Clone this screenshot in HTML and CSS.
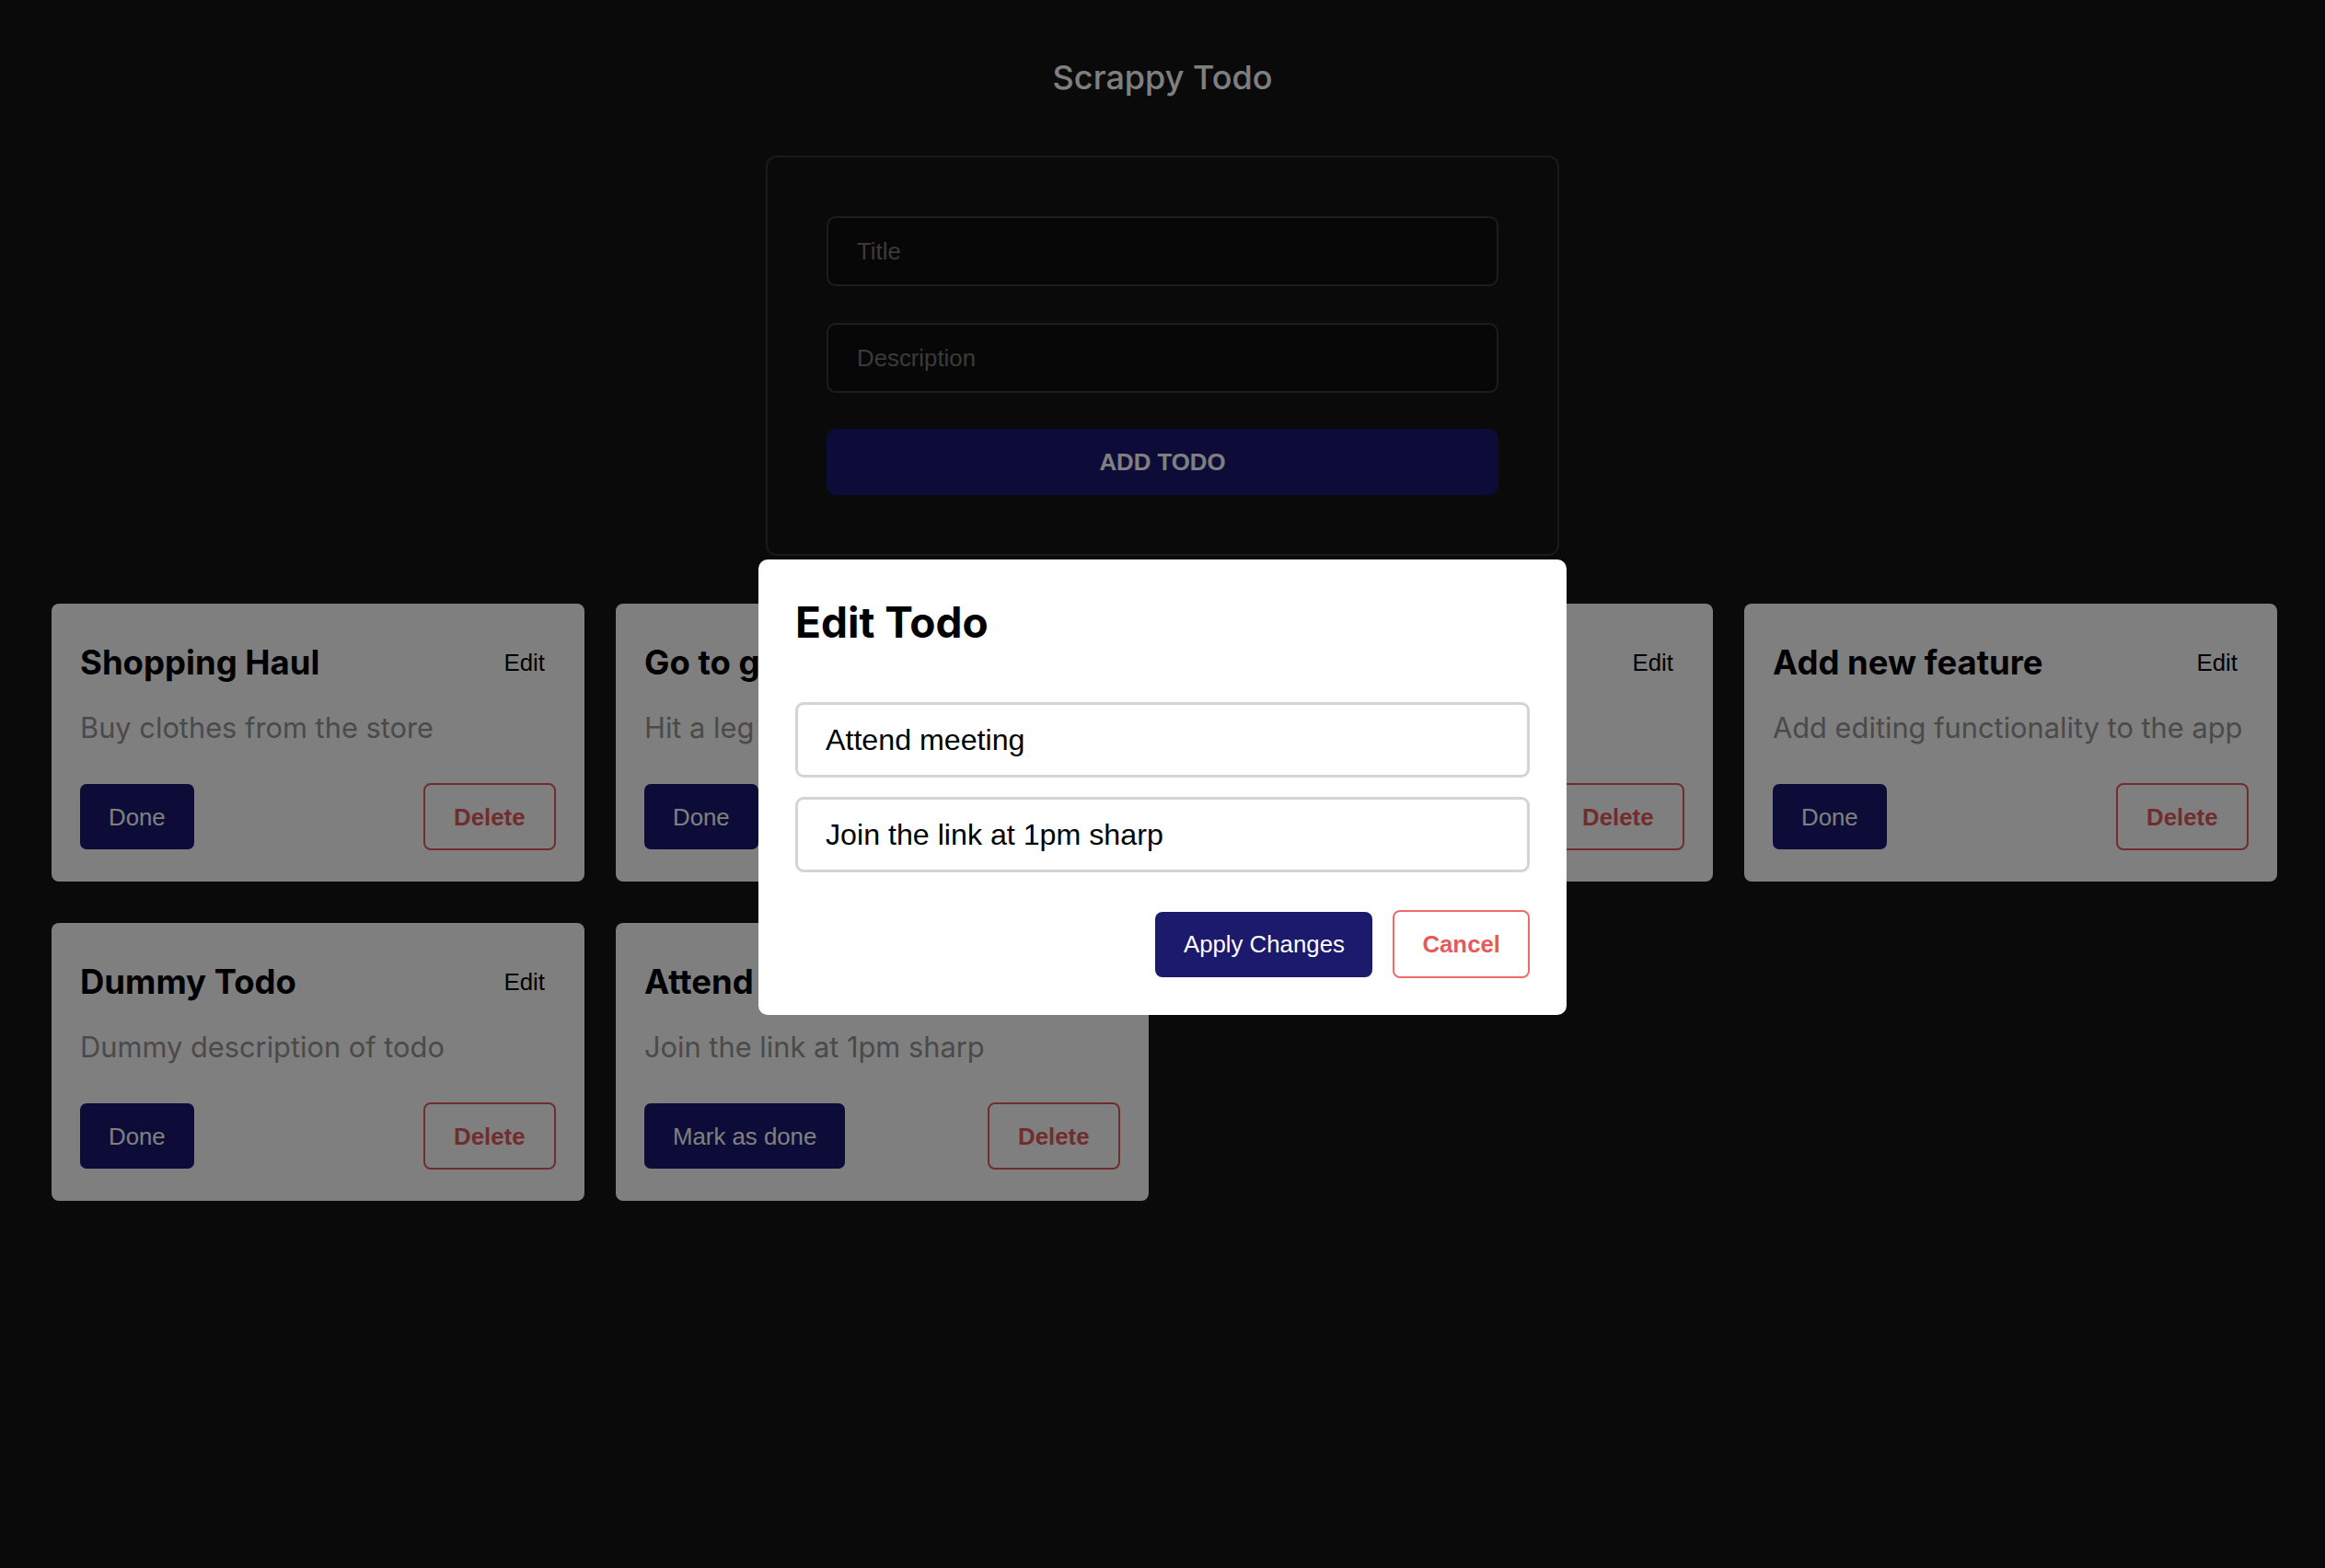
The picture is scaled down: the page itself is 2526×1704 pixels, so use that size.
FILE: index.html
```html
<!DOCTYPE html>
<html lang="en">
<head>
    <meta charset="UTF-8">
    <meta name="viewport" content="width=device-width, initial-scale=1.0">
    <title>Scrappy Todo</title>
    <link rel="stylesheet" href="styles.css">
</head>
<body>
    <div class="app">
        <h1 class="app-title">Scrappy Todo</h1>

        <!-- add form -->
        <form class="todo-form">
            <input class="form-input" type="text" placeholder="Title">
            <input class="form-input" type="text" placeholder="Description">
            <button class="add-button" type="button">Add Todo</button>
        </form>

        <!-- todo list -->
        <div class="todo-grid">
            <div class="todo-card">
                <div class="todo-header">
                    <h3 class="todo-title">Shopping Haul</h3>
                    <button class="edit-button">Edit</button>
                </div>
                <p class="todo-desc">Buy clothes from the store</p>
                <div class="todo-actions">
                    <button class="done-button">Done</button>
                    <button class="delete-button">Delete</button>
                </div>
            </div>
            <div class="todo-card">
                <div class="todo-header">
                    <h3 class="todo-title">Go to gym</h3>
                    <button class="edit-button">Edit</button>
                </div>
                <p class="todo-desc">Hit a leg day</p>
                <div class="todo-actions">
                    <button class="done-button">Done</button>
                    <button class="delete-button">Delete</button>
                </div>
            </div>
            <div class="todo-card">
                <div class="todo-header">
                    <h3 class="todo-title">Read a book</h3>
                    <button class="edit-button">Edit</button>
                </div>
                <p class="todo-desc">Finish two chapters</p>
                <div class="todo-actions">
                    <button class="done-button">Done</button>
                    <button class="delete-button">Delete</button>
                </div>
            </div>
            <div class="todo-card">
                <div class="todo-header">
                    <h3 class="todo-title">Add new feature</h3>
                    <button class="edit-button">Edit</button>
                </div>
                <p class="todo-desc">Add editing functionality to the app</p>
                <div class="todo-actions">
                    <button class="done-button">Done</button>
                    <button class="delete-button">Delete</button>
                </div>
            </div>
            <div class="todo-card">
                <div class="todo-header">
                    <h3 class="todo-title">Dummy Todo</h3>
                    <button class="edit-button">Edit</button>
                </div>
                <p class="todo-desc">Dummy description of todo</p>
                <div class="todo-actions">
                    <button class="done-button">Done</button>
                    <button class="delete-button">Delete</button>
                </div>
            </div>
            <div class="todo-card">
                <div class="todo-header">
                    <h3 class="todo-title">Attend meeting</h3>
                    <button class="edit-button">Edit</button>
                </div>
                <p class="todo-desc">Join the link at 1pm sharp</p>
                <div class="todo-actions">
                    <button class="done-button">Mark as done</button>
                    <button class="delete-button">Delete</button>
                </div>
            </div>
        </div>
    </div>

    <!-- edit modal -->
    <div class="overlay">
        <div class="modal">
            <h2 class="modal-title">Edit Todo</h2>
            <input class="modal-input" type="text" value="Attend meeting">
            <input class="modal-input" type="text" value="Join the link at 1pm sharp">
            <div class="modal-actions">
                <button class="apply-button">Apply Changes</button>
                <button class="cancel-button">Cancel</button>
            </div>
        </div>
    </div>
</body>
</html>
```

FILE: styles.css
```css
body {
    margin: 0;
    background-color: #141414;
    font-family: Inter, "Noto Sans", Arial, sans-serif;
    color: #fff;
}
/* buttons and inputs keep the browser font */
button, input {
    font-family: "Liberation Sans", Arial, Helvetica, sans-serif;
}
.app {
    padding-top: 62px;
}
.app-title {
    margin: 0;
    text-align: center;
    font-size: 36px;
    font-weight: 500;
    line-height: normal;
    color: #fff;
}
/* form */
.todo-form {
    width: 730px;
    margin: 63px auto 0;
    padding: 64px;
    border: 2px solid #353535;
    border-radius: 12px;
    display: flex;
    flex-direction: column;
    gap: 40px;
}
.form-input {
    font-size: 25.8px;
    line-height: 30px;
    padding: 21px 31px;
    background-color: #0e0e0e;
    border: 2px solid #3a3a3a;
    border-radius: 10px;
    color: #fff;
}
.form-input::placeholder {
    color: #757575;
}
.add-button {
    height: 72px;
    margin-top: -1px;
    background-color: #1a1870;
    color: #fff;
    border: none;
    border-radius: 10px;
    font-size: 25.8px;
    font-weight: 700;
    text-transform: uppercase;
}
/* list */
.todo-grid {
    display: grid;
    grid-template-columns: repeat(4, 1fr);
    gap: 45px 34px;
    padding: 0 52px 0 56px;
    margin-top: 52px;
}
.todo-card {
    background-color: #fff;
    border-radius: 8px;
    padding: 37px 31px 34px;
    color: #000;
}
.todo-header {
    display: flex;
    justify-content: space-between;
    align-items: center;
    height: 54px;
}
.todo-title {
    margin: 0;
    font-size: 36.5px;
    font-weight: 700;
    line-height: 44px;
}
.edit-button {
    background: none;
    border: none;
    padding: 12px;
    font-size: 25.8px;
    color: #000;
}
.todo-desc {
    margin: 25px 0 42px;
    font-size: 30.8px;
    line-height: 37px;
    color: #949494;
}
.todo-actions {
    display: flex;
    justify-content: space-between;
    align-items: center;
}
.done-button {
    background-color: #1a1870;
    color: #fff;
    border: none;
    border-radius: 7px;
    padding: 20.5px 31px;
    font-size: 25.8px;
    line-height: 30px;
}
.delete-button {
    background-color: transparent;
    color: #e25a5a;
    border: 2px solid #e25a5a;
    border-radius: 8px;
    padding: 19.5px 31.5px;
    font-size: 25.8px;
    line-height: 30px;
    font-weight: 700;
}
/* modal */
.overlay {
    position: fixed;
    inset: 0;
    padding-top: 7px;
    background-color: rgba(0, 0, 0, 0.5);
    display: flex;
    justify-content: center;
    align-items: center;
}
.modal {
    width: 798px;
    padding: 40px;
    background-color: #fff;
    border-radius: 10px;
    display: flex;
    flex-direction: column;
    color: #000;
}
.modal-title {
    margin: 0 0 59px;
    font-size: 46px;
    font-weight: 700;
    line-height: normal;
}
.modal-input {
    font-size: 32.2px;
    line-height: 37px;
    padding: 19.5px 30px;
    border: 3px solid #d4d4d4;
    border-radius: 9px;
    margin-bottom: 21px;
    color: #000;
}
.modal-actions {
    display: flex;
    justify-content: flex-end;
    align-items: center;
    gap: 22px;
    margin-top: 20px;
}
.apply-button {
    background-color: #1b1a6c;
    color: #fff;
    border: none;
    border-radius: 8px;
    padding: 20.5px 30.5px;
    font-size: 25.8px;
    line-height: 30px;
}
.cancel-button {
    background-color: #fff;
    color: #e65a5a;
    border: 2px solid #ec6c6c;
    border-radius: 8px;
    padding: 20px 30px;
    font-size: 25.8px;
    line-height: 30px;
    font-weight: 700;
}
```
